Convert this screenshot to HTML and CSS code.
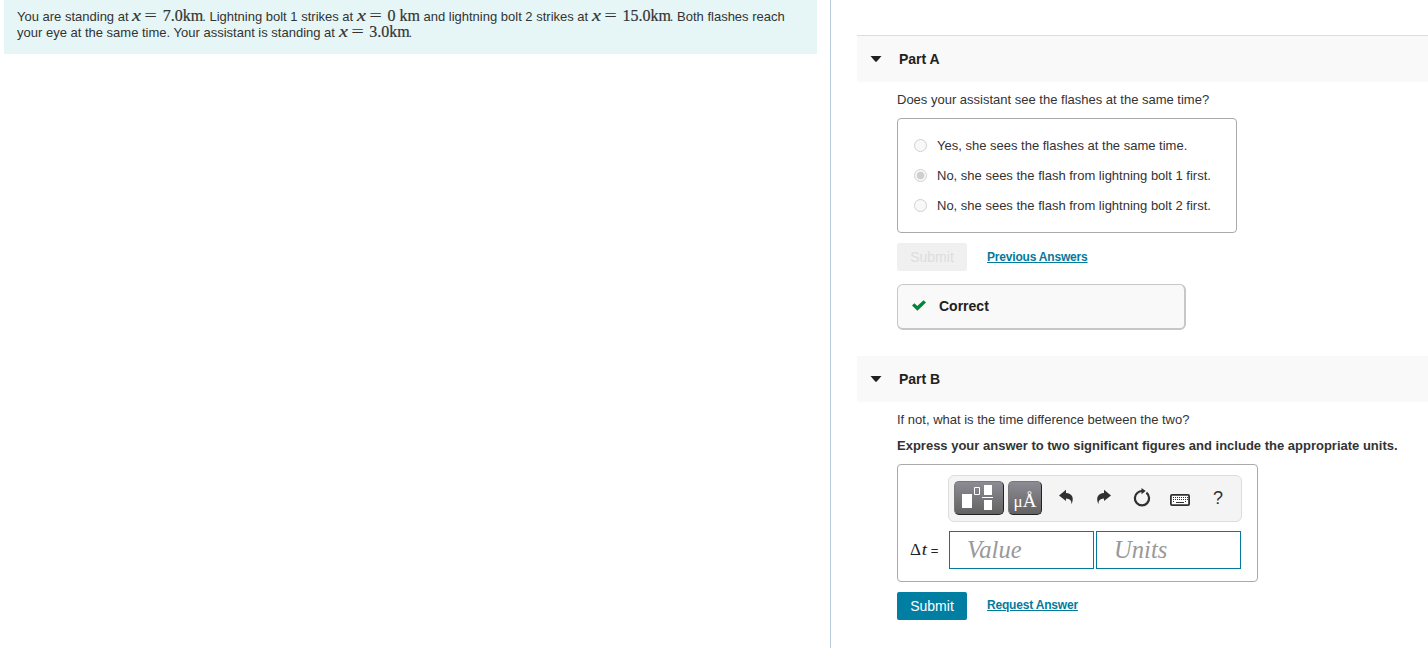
FILE: index.html
```html
<!DOCTYPE html>
<html lang="en">
<head>
<meta charset="utf-8">
<title>Lightning problem</title>
<link rel="stylesheet" href="styles.css">
</head>
<body>
<div class="page">
  <section class="left">
    <div class="intro">You are standing at <span class="math m7"><i>x</i><b>=</b><span>7.0km</span></span>. Lightning bolt 1 strikes at <span class="math m0"><i>x</i><b>=</b><span>0&nbsp;km</span></span> and lightning bolt 2 strikes at <span class="math m15"><i>x</i><b>=</b><span>15.0km</span></span>. Both flashes reach<br>your eye at the same time. Your assistant is standing at <span class="math m7"><i>x</i><b>=</b><span>3.0km</span></span>.</div>
  </section>
  <main class="right">
    <header class="part part-a">
      <svg class="caret" width="12" height="6" viewBox="0 0 12 6"><path d="M.5 0h11L7 5.200q-1 1-2 0z" fill="#212121"/></svg>
      <h2>Part A</h2>
    </header>
    <div class="body">
      <p class="question">Does your assistant see the flashes at the same time?</p>
      <div class="choices">
        <label class="choice"><span class="radio"></span><span>Yes, she sees the flashes at the same time.</span></label>
        <label class="choice"><span class="radio on"></span><span>No, she sees the flash from lightning bolt 1 first.</span></label>
        <label class="choice"><span class="radio"></span><span>No, she sees the flash from lightning bolt 2 first.</span></label>
      </div>
      <div class="actions">
        <button class="submit off">Submit</button>
        <a class="link">Previous Answers</a>
      </div>
      <div class="feedback">
        <svg width="14" height="11" viewBox="0 0 14 11"><path d="M0 5.600L2.400 3.200 5.300 6 11.500.2 14 2.400 5.400 10.800z" fill="#008638"/></svg>
        <span>Correct</span>
      </div>
    </div>
    <header class="part part-b">
      <svg class="caret" width="12" height="6" viewBox="0 0 12 6"><path d="M.5 0h11L7 5.200q-1 1-2 0z" fill="#212121"/></svg>
      <h2>Part B</h2>
    </header>
    <div class="body">
      <p class="question">If not, what is the time difference between the two?</p>
      <p class="instruction">Express your answer to two significant figures and include the appropriate units.</p>
      <div class="answer">
        <div class="toolbar">
          <span class="tool templates">
            <svg width="48" height="32" viewBox="0 0 48 32"><g fill="#fff"><path d="M7 12h10v14H7zM29 3h8v10h-8zM29 18h8v10h-8zM27 15h11v1H27z"/></g><path d="M19.500 5.500h5v7h-5z" fill="none" stroke="#fff"/></svg>
          </span>
          <span class="tool units">μ<span>Å</span></span>
          <svg class="ic" width="38" height="34" viewBox="0 0 38 34"><path d="M12 14.500L19 8.700v3.400c6 .3 8.500 4.500 5.600 11.200-.1-3.600-1.600-5.500-5.600-5.700V20z" fill="#303030"/></svg>
          <svg class="ic" width="38" height="34" viewBox="0 0 38 34"><path d="M26 14.500L19 8.700v3.400c-6 .3-8.500 4.500-5.600 11.200.1-3.600 1.600-5.500 5.600-5.700V20z" fill="#303030"/></svg>
          <svg class="ic" width="38" height="34" viewBox="0 0 38 34"><path d="M14.700 11.600a7.100 7.100 0 1 0 8.700.1" fill="none" stroke="#303030" stroke-width="2.200"/><path d="M18.500 7v6.200l4.200-3.200z" fill="#303030"/><path d="M14.500 11.800q2-1.800 4.500-1.800" fill="none" stroke="#303030" stroke-width="2"/></svg>
          <svg class="ic" width="38" height="34" viewBox="0 0 38 34"><rect x="9.900" y="13.900" width="18.200" height="10.200" rx="1" fill="#fff" stroke="#303030" stroke-width="1.800"/><path d="M12 16.500h15M12 18.500h15M12 20.500h2M24 20.500h2" stroke="#303030" stroke-dasharray="1 1"/><path d="M15 21.500h8" stroke="#303030"/></svg>
          <span class="help">?</span>
        </div>
        <div class="entry">
          <span class="var"><span>Δ</span><i>t</i><small>=</small></span>
          <span class="field">Value</span>
          <span class="field">Units</span>
        </div>
      </div>
      <div class="actions actions-b">
        <button class="submit">Submit</button>
        <a class="link">Request Answer</a>
      </div>
    </div>
  </main>
</div>
</body>
</html>
```
FILE: styles.css
```css
* { box-sizing: border-box; }
body { margin: 0; background: #fff; color: #333; font: 13px/16px "Liberation Sans", Arial, sans-serif; overflow: hidden; }
p, h2 { margin: 0; }
.page { display: flex; height: 648px; }
.left { width: 831px; flex: none; padding-left: 4px; border-right: 1px solid #b6cbdc; }
.intro { width: 813px; height: 54px; padding: 9px 0 0 13px; background: #e6f6f6; white-space: nowrap; }
.math { display: inline-flex; justify-content: space-between; align-items: baseline; height: 12px; font: 16px/12px "Liberation Serif", serif; -webkit-text-stroke: .2px #333; }
.math i { transform: scaleX(1.25); transform-origin: left; }
.math b { font-weight: 400; transform: scaleX(1.4); -webkit-text-stroke: 0; }
.m7 { width: 71px; margin-right: -1px; }
.m0 { width: 63px; }
.m15 { width: 79px; margin-right: -1px; }
.right { flex: 1; min-width: 0; padding: 35px 0 0 26px; }
.part { display: flex; align-items: center; height: 46px; padding-left: 13px; background: #f9f9f9; }
.part-a { height: 47px; border-top: 1px solid #ddd; }
.part h2 { margin-left: 17px; font-size: 14px; line-height: 18px; color: #212121; }
.caret { flex: none; }
.body { padding-left: 40px; white-space: nowrap; }
.question { padding-top: 10px; height: 36px; }
.choices { width: 340px; height: 115px; padding: 12px 16px; border: 1px solid #aaa; border-radius: 4px; }
.choice { display: flex; align-items: center; height: 30px; gap: 10px; }
.radio { width: 13px; height: 13px; margin-bottom: 2px; border: 1px solid #d1d1d1; border-radius: 50%; background: #f8f8f8; }
.radio.on { background: radial-gradient(circle, #cfcfcf 0 3.5px, #f8f8f8 4.2px); }
.actions { display: flex; align-items: flex-start; gap: 20px; margin-top: 10px; }
.submit { width: 70px; height: 28px; padding: 0; border: 0; border-radius: 2px; background: #007fa3; color: #fff; font: 14px/28px "Liberation Sans", Arial, sans-serif; }
.submit.off { background: #f0f0f0; color: #ddd; }
.link { margin-top: 6px; font-size: 12px; font-weight: 700; line-height: 16px; letter-spacing: -.19px; color: #047a9c; text-decoration: underline; }
.feedback { display: flex; align-items: center; width: 289px; height: 46px; margin: 13px 0 26px; padding: 0 0 2px 14px; gap: 13px; border: 1px solid #c7c7c7; border-right-width: 2px; border-bottom-width: 2px; border-radius: 6px; background: #f9f9f9; color: #212121; font-size: 14px; font-weight: 700; }
.instruction { height: 26px; font-weight: 700; }
.answer { width: 361px; height: 118px; padding-top: 10px; border: 1px solid #aaa; border-radius: 4px; }
.toolbar { display: flex; width: 294px; height: 47px; margin-left: 50px; padding: 5px; border: 1px solid #ddd; border-radius: 6px; background: #f4f4f4; }
.tool { flex: none; height: 34px; border: 1px solid #222; border-top-color: #777; border-left-color: #777; border-radius: 5px; background: linear-gradient(#8d8b93, #626262); color: #fff; }
.templates { width: 50px; }
.tool svg { display: block; }
.units { width: 34px; margin: 0 5px 0 4px; text-align: center; font: 17px/37px "Liberation Serif", serif; }
.units span { font-size: 19px; }
.ic { flex: none; }
.help { flex: none; width: 38px; text-align: center; font-size: 18px; line-height: 34px; color: #303030; }
.entry { display: flex; height: 38px; margin-top: 9px; gap: 2px; }
.var { display: flex; align-items: baseline; width: 49px; padding-left: 12px; font: 17px/37px "Liberation Serif", serif; color: #212121; }
.var i { margin-left: 1px; -webkit-text-stroke: .2px #212121; }
.var small { margin-left: 4px; font: 13px "Liberation Sans", Arial, sans-serif; }
.field { width: 145px; height: 38px; padding-left: 17px; border: 1px solid #047a9c; color: #999; font: italic 24.6px/36px "Liberation Serif", serif; }
.actions-b .link { margin-top: 5px; }
```
